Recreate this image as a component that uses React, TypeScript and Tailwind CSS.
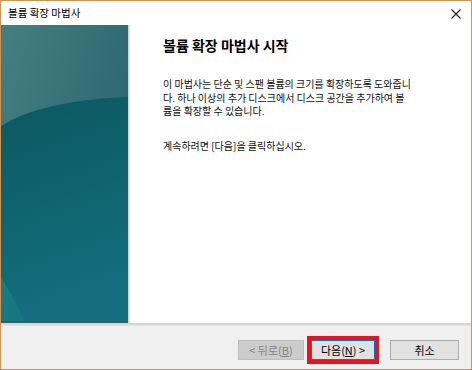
import React from 'react'

const font = { fontFamily: '"Noto Sans CJK KR", "Noto Sans", sans-serif' }

function SidePanel() {
	return (
		<svg width="127" height="298" viewBox="0 0 127 298" className="block">
			<defs>
				<linearGradient id="topg" x1="0" y1="0" x2="1" y2="0.6">
					<stop offset="0" stopColor="#457f80" />
					<stop offset="1" stopColor="#28656d" />
				</linearGradient>
				<linearGradient id="lowg" x1="0" y1="0" x2="0.2" y2="1">
					<stop offset="0" stopColor="#0c5760" />
					<stop offset="0.55" stopColor="#0f6570" />
					<stop offset="1" stopColor="#146e7d" />
				</linearGradient>
				<linearGradient id="cornerg" x1="0" y1="0" x2="1" y2="1">
					<stop offset="0" stopColor="#1b8088" />
					<stop offset="1" stopColor="#16767f" />
				</linearGradient>
			</defs>
			<rect x="0" y="0" width="127" height="298" fill="url(#topg)" />
			<path d="M0,101 Q38,76 127,72 L127,298 L0,298 Z" fill="url(#lowg)" />
			<path d="M0,252 Q16,278 24,298 L0,298 Z" fill="url(#cornerg)" opacity="0.8" />
			<rect x="0" y="296" width="127" height="2" fill="#2c6270" />
		</svg>
	)
}

function WinButton({
	children,
	className,
}: {
	children: React.ReactNode
	className?: string
}) {
	return (
		<div
			className={`h-[20px] flex items-center justify-center text-[11px] leading-none ${className ?? ''}`}
		>
			{children}
		</div>
	)
}

export default function App() {
	return (
		<div
			className="w-[472px] h-[370px] bg-white border border-[#d8904f] flex flex-col text-black overflow-hidden"
			style={font}
		>
			{/* title bar */}
			<div className="h-[24px] flex items-center justify-between pl-[7px] pr-[10px] bg-white">
				<span className="text-[10.5px] leading-none">볼륨 확장 마법사</span>
				<svg width="10" height="10" viewBox="0 0 10 10" className="mt-[1px]">
					<path d="M0.5 0.5 L9.5 9.5 M9.5 0.5 L0.5 9.5" stroke="#222" strokeWidth="1.1" />
				</svg>
			</div>

			{/* body */}
			<div className="h-[298px] flex">
				<SidePanel />
				<div className="w-[3px] h-full bg-gradient-to-r from-[#c9c9c9] via-[#e6e6e6] to-white" />
				<div className="flex-1 pl-[32px] pt-[10px]">
					<div className="text-[14px] font-bold leading-[20px]">
						볼륨 확장 마법사 시작
					</div>
					<div className="mt-[22px] text-[10px] leading-[13.5px] text-[#111]">
						이 마법사는 단순 및 스팬 볼륨의 크기를 확장하도록 도와줍니
						<br />
						다. 하나 이상의 추가 디스크에서 디스크 공간을 추가하여 볼
						<br />
						륨을 확장할 수 있습니다.
					</div>
					<div className="mt-[21px] text-[10px] leading-[13.5px] text-[#111]">
						계속하려면 [다음]을 클릭하십시오.
					</div>
				</div>
			</div>

			{/* separator */}
			<div className="h-[3px] bg-[#d6d6d6] border-b border-[#e2e2e2]" />

			{/* footer */}
			<div className="flex-1 bg-[#f0f0f0] flex items-start pt-[10px] pr-[12px] justify-end">
				<WinButton className="w-[66px] mt-[4px] bg-[#cccccc] border border-[#bfbfbf] text-[#838383]">
					&lt; 뒤로(<span className="underline">B</span>)
				</WinButton>
				<div className="ml-[3px] border-4 border-[#e8141c]">
					<WinButton className="w-[64px] bg-[#e1e1e1] border border-[#0078d7]">
						다음(<span className="underline">N</span>) &gt;
					</WinButton>
				</div>
				<WinButton className="w-[69px] ml-[11px] mt-[4px] bg-[#e1e1e1] border border-[#adadad]">
					취소
				</WinButton>
			</div>
		</div>
	)
}
